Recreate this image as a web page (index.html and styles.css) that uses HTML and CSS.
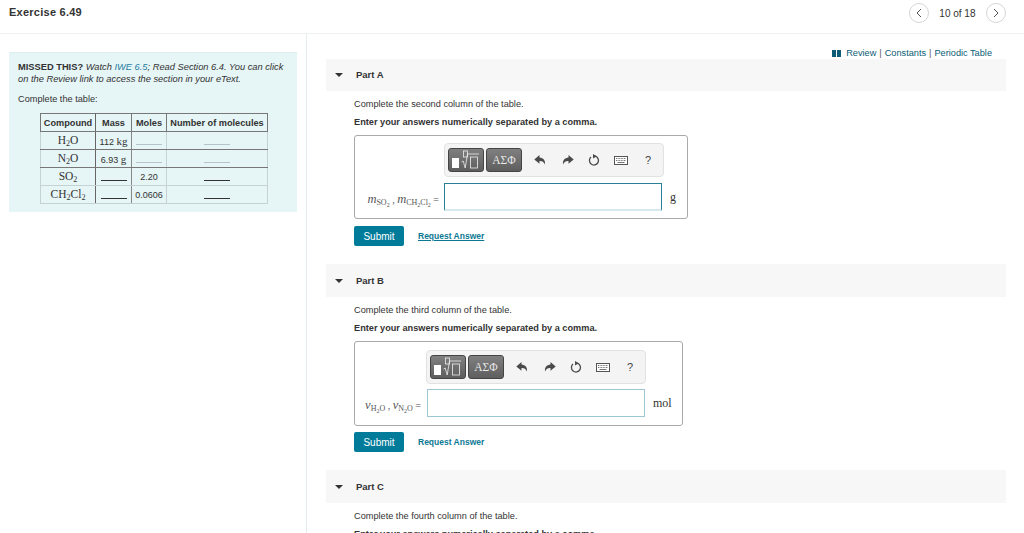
FILE: index.html
```html
<!DOCTYPE html>
<html lang="en">
<head>
<meta charset="utf-8">
<title>Exercise 6.49</title>
<link rel="stylesheet" href="styles.css">
</head>
<body>
<svg width="0" height="0" class="defs">
  <symbol id="undo" viewBox="0 0 12 12"><path d="M5.500 1 0.300 5.600 5.500 9.800V7c2.600-.2 4.200.9 5.500 3.400.4-4-1.600-6.500-5.500-6.800z" fill="#4a4a4a"/></symbol>
  <symbol id="redo" viewBox="0 0 12 12"><path d="M6.500 1 11.700 5.600 6.500 9.800V7C3.900 6.800 2.300 7.900 1 10.400.6 6.400 2.600 3.900 6.500 3.600z" fill="#4a4a4a"/></symbol>
  <symbol id="reset" viewBox="0 0 12 12"><path d="M7.200 2.200A4.500 4.500 0 1 1 3 3.100" fill="none" stroke="#4a4a4a" stroke-width="1.300"/><path d="M5 0 8.800 2.200 5 4.400z" fill="#4a4a4a"/></symbol>
  <symbol id="kbd" viewBox="0 0 14 9"><rect x=".5" y=".5" width="13" height="8" fill="#fff" stroke="#555"/><path d="M2 2.500h10M2 4.500h10" stroke="#777" stroke-dasharray="1 .6"/><path d="M3.500 6.500h7" stroke="#777"/></symbol>
  <symbol id="tmpl" viewBox="0 0 30 20"><rect x="1" y="8" width="7" height="10" fill="#fff"/><path d="M10.500 12l1.700-1 2 7 2.300-14H28" fill="none" stroke="#eee" stroke-width=".8"/><rect x="12.500" y="1" width="4" height="6" fill="none" stroke="#eee" stroke-width=".8"/><rect x="19.500" y="7" width="7" height="11" fill="none" stroke="#eee" stroke-width=".8"/></symbol>
</svg>

<header class="topbar">
  <h1 class="title">Exercise 6.49</h1>
  <nav class="pager">
    <span class="circle"><svg width="8" height="10" viewBox="0 0 8 10"><path d="M6 1 2 5l4 4" fill="none" stroke="#555" stroke-width="1"/></svg></span>
    <span class="count">10 of 18</span>
    <span class="circle"><svg width="8" height="10" viewBox="0 0 8 10"><path d="M2 1l4 4-4 4" fill="none" stroke="#555" stroke-width="1"/></svg></span>
  </nav>
</header>

<div class="columns">
  <aside class="left">
    <div class="panel">
      <p class="intro"><b>MISSED THIS?</b> <i>Watch <span class="iwe">IWE 6.5</span>; Read Section 6.4. You can click on the Review link to access the section in your eText.</i></p>
      <p class="lead">Complete the table:</p>
      <table class="data">
        <thead>
          <tr><th class="c1">Compound</th><th class="c2">Mass</th><th class="c3">Moles</th><th class="c4">Number of molecules</th></tr>
        </thead>
        <tbody>
          <tr><td class="serif">H<sub>2</sub>O</td><td class="given">112 <span class="serif">kg</span></td><td><span class="blank light"></span></td><td><span class="blank light"></span></td></tr>
          <tr><td class="serif">N<sub>2</sub>O</td><td class="given">6.93 <span class="serif">g</span></td><td><span class="blank light"></span></td><td><span class="blank light"></span></td></tr>
          <tr><td class="serif">SO<sub>2</sub></td><td><span class="blank"></span></td><td>2.20</td><td><span class="blank"></span></td></tr>
          <tr><td class="serif">CH<sub>2</sub>Cl<sub>2</sub></td><td><span class="blank"></span></td><td>0.0606</td><td><span class="blank"></span></td></tr>
        </tbody>
      </table>
    </div>
  </aside>

  <main class="right">
    <div class="links"><svg class="book" width="9" height="7" viewBox="0 0 9 7"><path d="M0 0h4v7H0zM5 0h4v7H5z" fill="#0b5c74"/></svg><a>Review</a><span class="sep">|</span><a>Constants</a><span class="sep">|</span><a>Periodic Table</a></div>

    <section class="part">
      <div class="part-head"><span class="caret"></span><span>Part A</span></div>
      <div class="part-body">
        <p class="line">Complete the second column of the table.</p>
        <p class="line strong">Enter your answers numerically separated by a comma.</p>
        <div class="answer answer-a">
          <div class="toolbar tb-a">
            <span class="tool tool-tmpl"><svg width="30" height="20"><use href="#tmpl"/></svg></span>
            <span class="tool tool-sym">ΑΣΦ</span>
            <svg class="ico" width="12" height="12"><use href="#undo"/></svg>
            <svg class="ico" width="12" height="12"><use href="#redo"/></svg>
            <svg class="ico" width="12" height="12"><use href="#reset"/></svg>
            <svg class="ico" width="14" height="9"><use href="#kbd"/></svg>
            <span class="help">?</span>
          </div>
          <div class="eq eq-a">
            <span class="label label-a"><i>m</i><sub>SO<sub>2</sub></sub> , <i>m</i><sub>CH<sub>2</sub>Cl<sub>2</sub></sub> =</span>
            <span class="field field-a"></span>
            <span class="unit">g</span>
          </div>
        </div>
        <div class="actions"><button class="submit" type="button">Submit</button><a class="req under">Request Answer</a></div>
      </div>
    </section>

    <section class="part">
      <div class="part-head"><span class="caret"></span><span>Part B</span></div>
      <div class="part-body">
        <p class="line">Complete the third column of the table.</p>
        <p class="line strong">Enter your answers numerically separated by a comma.</p>
        <div class="answer answer-b">
          <div class="toolbar tb-b">
            <span class="tool tool-tmpl"><svg width="30" height="20"><use href="#tmpl"/></svg></span>
            <span class="tool tool-sym">ΑΣΦ</span>
            <svg class="ico" width="12" height="12"><use href="#undo"/></svg>
            <svg class="ico" width="12" height="12"><use href="#redo"/></svg>
            <svg class="ico" width="12" height="12"><use href="#reset"/></svg>
            <svg class="ico" width="14" height="9"><use href="#kbd"/></svg>
            <span class="help">?</span>
          </div>
          <div class="eq">
            <span class="label label-b"><i>ν</i><sub>H<sub>2</sub>O</sub> , <i>ν</i><sub>N<sub>2</sub>O</sub> =</span>
            <span class="field field-b"></span>
            <span class="unit unit-b">mol</span>
          </div>
        </div>
        <div class="actions"><button class="submit" type="button">Submit</button><a class="req">Request Answer</a></div>
      </div>
    </section>

    <section class="part">
      <div class="part-head"><span class="caret"></span><span>Part C</span></div>
      <div class="part-body">
        <p class="line">Complete the fourth column of the table.</p>
        <p class="line strong">Enter your answers numerically separated by a comma.</p>
      </div>
    </section>
  </main>
</div>
</body>
</html>
```
FILE: styles.css
```css
* { box-sizing: border-box; }
html, body { margin: 0; padding: 0; height: 533px; overflow: hidden; background: #fff; }
body { font-family: "Liberation Sans", Arial, sans-serif; font-size: 9.2px; color: #333; }
.defs { position: absolute; }
p { margin: 0; }
sub { font-size: 70%; line-height: 0; vertical-align: -0.25em; }
.serif { font-family: "Liberation Serif", serif; }

.topbar { height: 34px; border-bottom: 1px solid #f0f0f0; display: flex; align-items: center; justify-content: space-between; padding: 0 18px 9px 9px; }
.title { margin: 0; font-size: 11px; font-weight: bold; color: #333; letter-spacing: .25px; line-height: 24px; }
.pager { display: flex; align-items: center; margin-top: 2px; }
.circle { width: 20px; height: 20px; border: 1px solid #d5d5d5; border-radius: 50%; display: flex; align-items: center; justify-content: center; }
.count { font-size: 10px; margin: 0 10.5px; }

.columns { display: flex; height: 499px; }
.left { width: 307px; border-right: 1px solid #e6edf0; padding: 18px 9px 0 9px; }
.panel { width: 288px; height: 160px; background: #e6f5f6; border-top: 1px solid #dfeced; padding: 9px 10px 0 9px; }
.intro { font-size: 9.3px; line-height: 11.5px; color: #333; }
.iwe { color: #1f7f9f; }
.lead { margin-top: 8px; line-height: 12px; }
.data { margin: 8px 0 0 22px; border-collapse: collapse; width: 227px; table-layout: fixed; border: 1px solid #666; }
.data th, .data td { padding: 0; text-align: center; border: 1px solid #c4d2d4; font-weight: normal; }
.data th { height: 18px; font-weight: bold; color: #333; border-color: #777; font-size: 9.2px; }
.data td { height: 18px; font-size: 9px; }
.data td.serif { font-size: 11.5px; color: #333; padding-bottom: 2px; }
.data td:first-child, .data th:first-child { border-right: 1px solid #666; }
.data tbody tr:first-child td, .data tbody tr:nth-child(2) td { border-bottom: 1px solid #777; }
.data tbody td:nth-child(2) { border-right-color: #888; }
.c1 { width: 55px; } .c2 { width: 36px; } .c3 { width: 35px; } .c4 { width: 101px; }
.given { text-align: center; white-space: nowrap; }
.given .serif { font-size: 11px; }
.blank { display: inline-block; width: 26px; border-bottom: 1px solid #333; vertical-align: -1px; height: 6px; }
.blank.light { border-bottom-color: #b5c4c8; }

.right { flex: 1; padding-left: 19px; position: relative; }
.links { position: absolute; top: 13px; right: 32px; display: flex; align-items: center; color: #0b5c74; line-height: 12px; }
.book { margin-right: 5px; }
.sep { margin: 0 3px; color: #555; }

.part { width: 680px; }
.part-head { height: 33px; background: #f7f7f7; display: flex; align-items: center; font-weight: bold; font-size: 9.5px; color: #333; padding-left: 9px; }
.links + .part { margin-top: 25px; }
.links + .part .part-head { height: 32px; padding-bottom: 1px; }
.part + .part { margin-top: 18px; }
.caret { width: 0; height: 0; border: 4px solid transparent; border-top: 4px solid #333; border-bottom: 0; margin-right: 13px; }
.part-body { padding: 7px 0 0 28px; }
.line { line-height: 12px; margin-bottom: 6px; }
.strong { font-weight: bold; }

.answer { border: 1px solid #aaa; border-radius: 3px; background: #fff; margin-top: 7px; height: 84px; padding: 7px 0 0 0; }
.answer-a { width: 334px; margin-bottom: 7px; }
.answer-b { width: 329px; height: 85px; padding-top: 8px; }
.toolbar { height: 34px; width: 220px; background: #f4f4f4; border: 1px solid #e2e2e2; border-radius: 4px; display: flex; align-items: center; padding-left: 3px; margin-left: 89px; }
.tb-b { margin-left: 71px; }
.tool { height: 24px; background: linear-gradient(#808080, #5e5e5e); border: 1px solid #444; border-radius: 3px; color: #e8e8e8; display: flex; align-items: center; justify-content: center; flex: none; }
.tool-tmpl { width: 36px; margin-right: 2px; }
.tool-sym { width: 36px; font-family: "Liberation Serif", serif; font-size: 11.5px; margin-right: 12px; }
.ico { margin-right: 16px; flex: none; }
.ico:nth-of-type(2), .ico:nth-of-type(3) { margin-right: 14px; }
.ico:nth-of-type(4) { margin-right: 17px; }
.help { font-size: 11px; color: #444; }
.eq { display: flex; align-items: center; margin-top: 5px; }
.eq-a { margin-top: 6px; }
.label { font-family: "Liberation Serif", serif; font-size: 10px; color: #555; white-space: nowrap; text-align: right; padding-top: 4px; }
.label i { font-size: 12.5px; }
.label sub { font-size: 8px; }
.label sub sub { font-size: 6px; }
.label-a { width: 89px; padding-right: 5px; }
.label-b { width: 72px; padding-right: 6px; }
.field { display: block; height: 28px; border: 1px solid #bcd9e0; background: #fff; }
.field-a { width: 218px; border-color: #2a7f98 #2a7f98 #d5e9ee; border-bottom-width: 2px; }
.field-b { width: 218px; border-color: #9cc7d2; }
.unit { font-family: "Liberation Serif", serif; font-size: 12px; margin-left: 8px; color: #333; }
.actions { display: flex; align-items: center; margin-top: 6px; }
.submit { width: 50px; height: 20px; padding: 0; border: 0; border-radius: 2px; background: #007c9a; color: #fff; font: 10px "Liberation Sans", Arial, sans-serif; }
.req { margin-left: 14px; font-weight: bold; font-size: 8.5px; color: #0b7893; }
.under { text-decoration: underline; }
```
